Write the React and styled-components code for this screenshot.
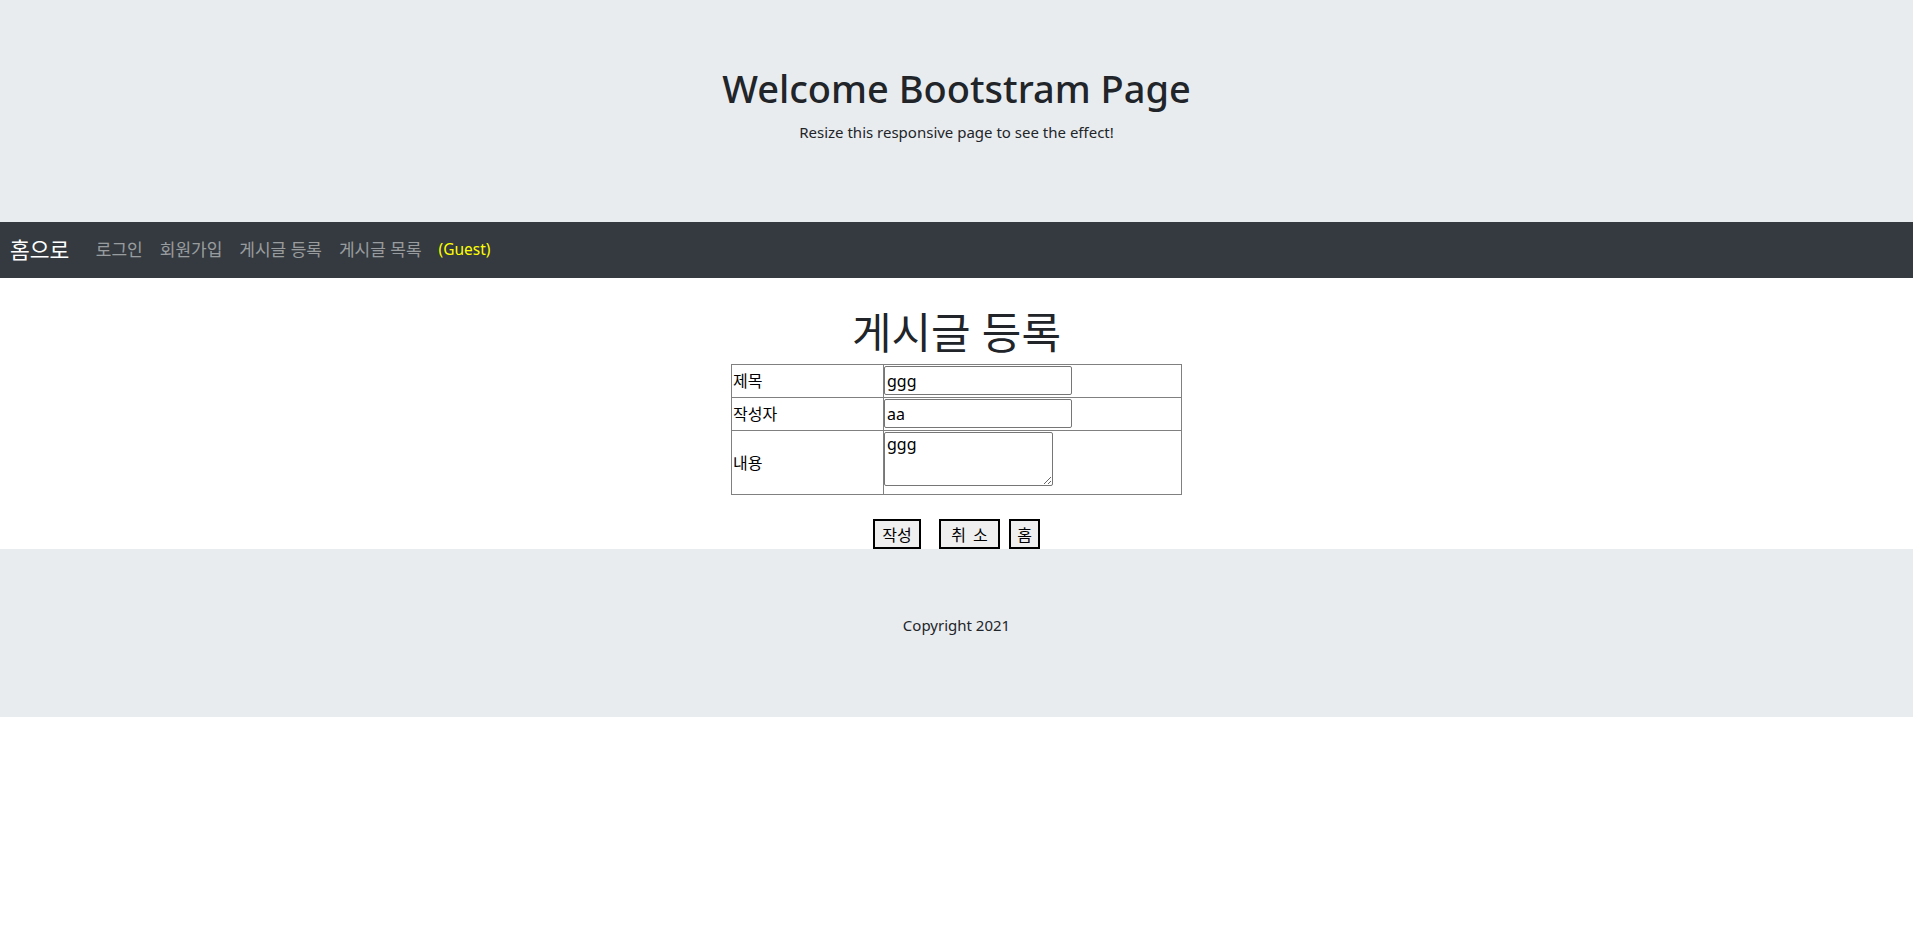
import React from "react";
import styled, { createGlobalStyle } from "styled-components";

const GlobalStyle = createGlobalStyle`
  body {
    margin: 0;
    background: #fff;
    color: #212529;
    font-family: "Noto Sans", "Noto Sans CJK KR", sans-serif;
    font-size: 16px;
    line-height: 1.5;
  }
`;

const App = () => {
  return (
    <>
      <GlobalStyle />
      <Jumbotron>
        <Headline>Welcome Bootstram Page</Headline>
        <Lead>Resize this responsive page to see the effect!</Lead>
      </Jumbotron>
      <Navbar>
        <Brand href="#">홈으로</Brand>
        <NavLink href="#">로그인</NavLink>
        <NavLink href="#">회원가입</NavLink>
        <NavLink href="#">게시글 등록</NavLink>
        <NavLink href="#">게시글 목록</NavLink>
        <Guest>(Guest)</Guest>
      </Navbar>
      <Main>
        <PageTitle>게시글 등록</PageTitle>
        <FormTable>
          <tbody>
            <tr>
              <Label>제목</Label>
              <Field>
                <Input defaultValue="ggg" />
              </Field>
            </tr>
            <tr>
              <Label>작성자</Label>
              <Field>
                <Input defaultValue="aa" />
              </Field>
            </tr>
            <tr>
              <Label>내용</Label>
              <Field>
                <TextArea defaultValue="ggg" />
              </Field>
            </tr>
          </tbody>
        </FormTable>
        <ButtonRow>
          <Btn $w={48}>작성</Btn>
          <Btn $w={61} $ml={18}>취&nbsp;&nbsp;소</Btn>
          <Btn $w={31} $ml={9}>홈</Btn>
        </ButtonRow>
      </Main>
      <Footer>
        <Lead>Copyright 2021</Lead>
      </Footer>
    </>
  );
};

export default App;

// style
const Jumbotron = styled.div`
  background-color: #e9ecef;
  padding: 64px 32px 62px;
  text-align: center;
`;
const Headline = styled.h1`
  margin: 0 0 8px;
  font-size: 38px;
  font-weight: 500;
  line-height: 48px;
`;
const Lead = styled.p`
  margin: 0 0 16px;
  font-size: 15px;
  line-height: 24px;
`;
const Navbar = styled.nav`
  height: 56px;
  background-color: #343a40;
  display: flex;
  align-items: center;
  padding: 0 10px;
`;
const Brand = styled.a`
  color: #fff;
  font-size: 21.5px;
  text-decoration: none;
  margin-right: 18px;
`;
const NavLink = styled.a`
  color: rgba(255, 255, 255, 0.5);
  font-size: 17px;
  text-decoration: none;
  padding: 0 8.5px;
`;
const Guest = styled.span`
  color: #ffff00;
  font-size: 15.5px;
  padding: 0 8.5px;
`;
const Main = styled.main`
  display: flex;
  flex-direction: column;
  align-items: center;
  padding-top: 31px;
`;
const PageTitle = styled.h1`
  margin: 0 0 7px;
  font-size: 43px;
  font-weight: 400;
  line-height: 48px;
`;
const FormTable = styled.table`
  border-collapse: collapse;
  width: 451px;
`;
const Label = styled.td`
  width: 150px;
  border: 1px solid #808080;
  padding: 0 0 0 1px;
  font-size: 16px;
  color: #000;
  vertical-align: middle;
`;
const Field = styled.td`
  border: 1px solid #808080;
  padding: 1px 0 2px;
  vertical-align: middle;
`;
const Input = styled.input`
  display: block;
  box-sizing: border-box;
  width: 188px;
  height: 29px;
  padding: 1px 2px;
  border: 1px solid #767676;
  border-radius: 2px;
  font-family: "Noto Sans", "Noto Sans CJK KR", sans-serif;
  font-size: 16px;
  color: #000;
`;
const TextArea = styled.textarea`
  display: block;
  box-sizing: border-box;
  width: 169px;
  height: 54px;
  margin-bottom: 6px;
  padding: 2px;
  border: 1px solid #767676;
  border-radius: 2px;
  font-family: "Noto Sans", "Noto Sans CJK KR", sans-serif;
  font-size: 16px;
  line-height: 1.2;
  color: #000;
  resize: both;
`;
const ButtonRow = styled.div`
  display: flex;
  justify-content: center;
  padding-top: 24px;
`;
const Btn = styled.button`
  box-sizing: border-box;
  width: ${(p) => p.$w}px;
  height: 30px;
  margin-left: ${(p) => p.$ml || 0}px;
  padding: 0;
  background-color: #efefef;
  border: 2px solid #000;
  font-family: "Noto Sans CJK KR", sans-serif;
  font-size: 16px;
  line-height: 1;
  color: #000;
`;
const Footer = styled.footer`
  background-color: #e9ecef;
  padding: 64px 32px;
  text-align: center;
`;
